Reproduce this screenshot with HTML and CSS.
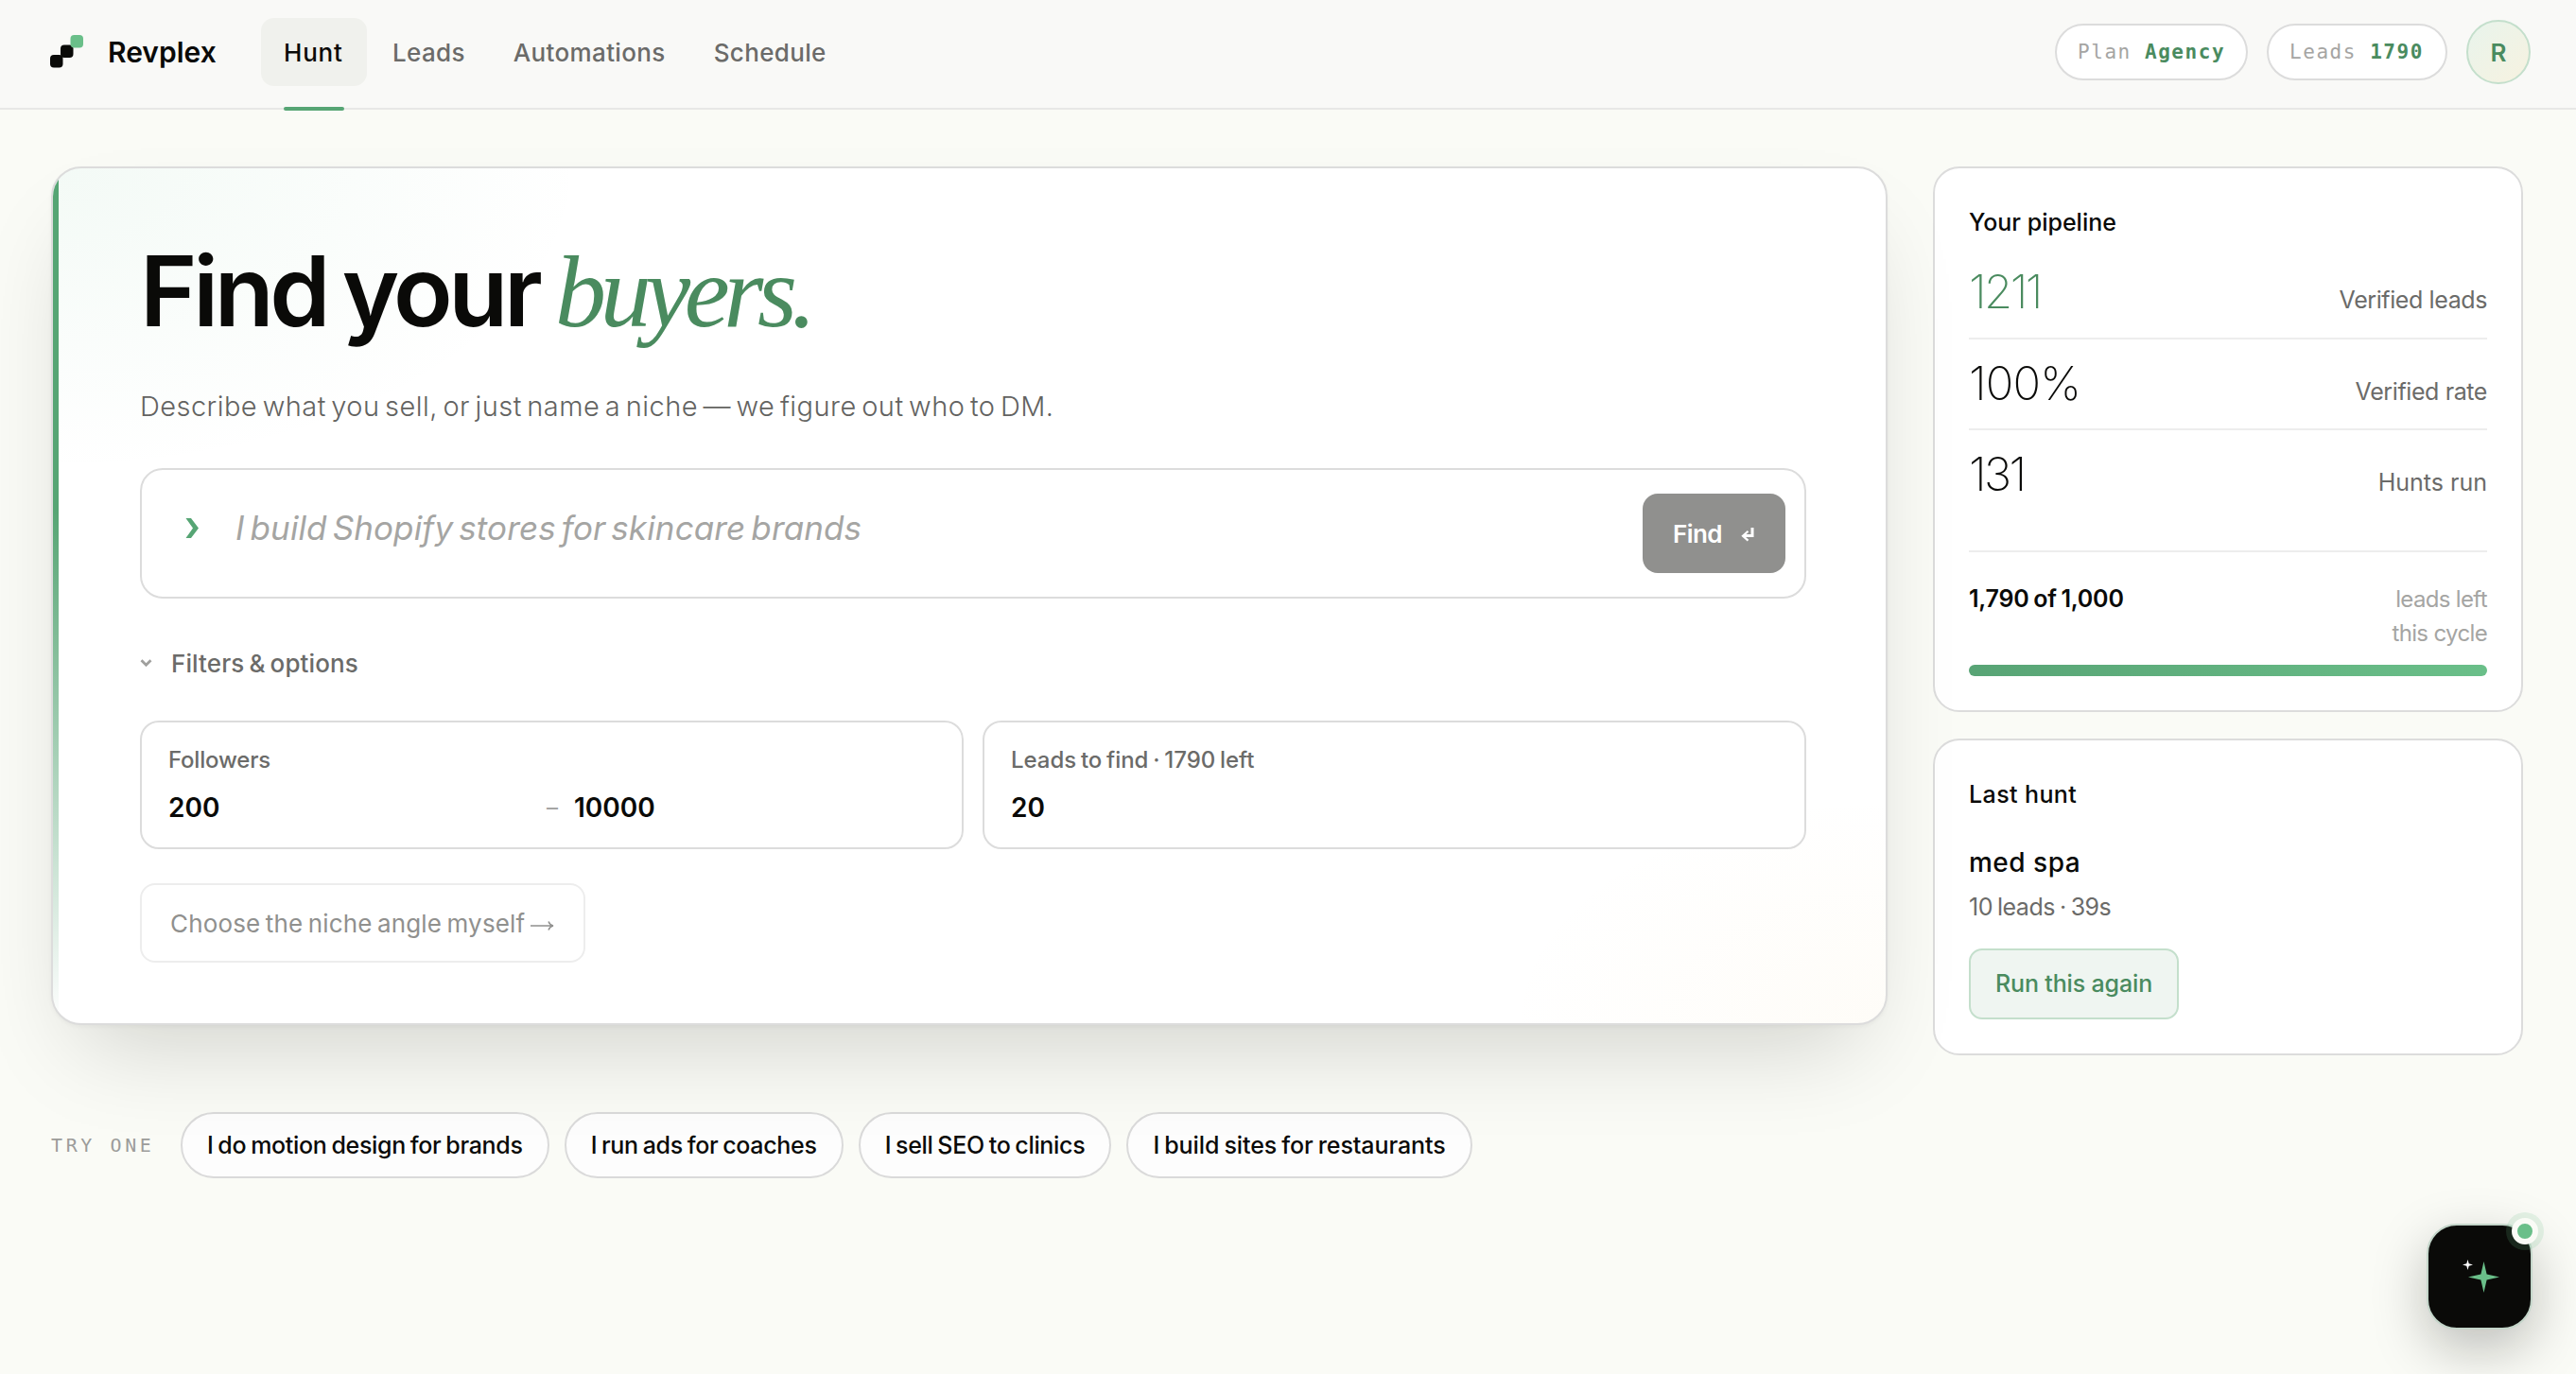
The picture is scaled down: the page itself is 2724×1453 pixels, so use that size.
FILE: index.html
```html
<!DOCTYPE html>
<html lang="en">

<head>
    <meta charset="UTF-8">
    <meta name="viewport" content="width=device-width, initial-scale=1.0">
    <title>Revplex</title>
    <link rel="stylesheet" href="styles.css">
</head>

<body>
    <header class="topbar">
        <a class="brand">
            <svg class="brand-mark" viewBox="0 0 36 36">
                <rect x="1" y="21" width="13.5" height="13.5" rx="4" fill="#0a0a08" />
                <rect x="12" y="10.5" width="13.5" height="13.5" rx="4" fill="#0a0a08" />
                <rect x="22.5" y="0" width="13.5" height="13.5" rx="4" fill="#6abf89" />
            </svg>
            <span class="brand-name">Revplex</span>
        </a>
        <nav class="nav">
            <a class="nav-link active">Hunt</a>
            <a class="nav-link">Leads</a>
            <a class="nav-link">Automations</a>
            <a class="nav-link">Schedule</a>
        </nav>
        <div class="account">
            <div class="badge plan">Plan <b>Agency</b></div>
            <div class="badge">Leads <b>1790</b></div>
            <div class="avatar">R</div>
        </div>
    </header>

    <main class="layout">
        <div class="left">
            <section class="hero">
                <h1 class="title">Find your <em>buyers.</em></h1>
                <p class="subtitle">Describe what you sell, or just name a niche — we figure out who to DM.</p>

                <div class="prompt">
                    <svg class="prompt-mark" viewBox="0 0 14 21">
                        <path d="M0.5 0H6L14 10.5L6 21H0.5L8 10.5Z" fill="#56a574" />
                    </svg>
                    <span class="prompt-text">I build Shopify stores for skincare brands</span>
                    <button class="find">
                        Find
                        <svg class="return" viewBox="0 0 14 15">
                            <path d="M12 0V8.5H2.5" fill="none" stroke="#fff" stroke-width="3" />
                            <path d="M7.5 3.8L2 8.7L7.5 13.6" fill="none" stroke="#fff" stroke-width="2.2" />
                        </svg>
                    </button>
                </div>

                <div class="filters-toggle">
                    <svg class="caret" viewBox="0 0 13 8">
                        <path d="M1.5 1.2L6.5 6.2L11.5 1.2" fill="none" stroke="#a0a09e" stroke-width="2.8" />
                    </svg>
                    Filters &amp; options
                </div>

                <div class="filters">
                    <div class="field">
                        <div class="field-label">Followers</div>
                        <div class="range">
                            <span class="value">200</span>
                            <span class="dash">–</span>
                            <span class="value max">10000</span>
                        </div>
                    </div>
                    <div class="field">
                        <div class="field-label leads-label">Leads to find · 1790 left</div>
                        <div class="range">
                            <span class="value">20</span>
                        </div>
                    </div>
                </div>

                <button class="choose">
                    Choose the niche angle myself
                    <svg class="arrow" viewBox="0 0 25 12">
                        <path d="M0 6H24M19 1.5C20 4 21.5 5.5 24 6C21.5 6.5 20 8 19 10.5" fill="none" stroke="#90908e" stroke-width="1.5" />
                    </svg>
                </button>
            </section>

            <div class="try">
                <span class="try-label">TRY ONE</span>
                <button class="chip">I do motion design for brands</button>
                <button class="chip">I run ads for coaches</button>
                <button class="chip">I sell SEO to clinics</button>
                <button class="chip wide">I build sites for restaurants</button>
            </div>
        </div>

        <aside class="side">
            <section class="card">
                <h2 class="card-title">Your pipeline</h2>
                <div class="stat">
                    <span class="number green">1211</span>
                    <span class="stat-label">Verified leads</span>
                </div>
                <div class="stat">
                    <span class="number rate">100%</span>
                    <span class="stat-label">Verified rate</span>
                </div>
                <div class="stat">
                    <span class="number">131</span>
                    <span class="stat-label hunts">Hunts run</span>
                </div>
                <div class="quota">
                    <span class="quota-count">1,790 of 1,000</span>
                    <span class="quota-note">leads left<br>this cycle</span>
                </div>
                <div class="bar"></div>
            </section>

            <section class="card">
                <h2 class="card-title last">Last hunt</h2>
                <div class="hunt-name">med spa</div>
                <div class="hunt-meta">10 leads · 39s</div>
                <button class="again">Run this again</button>
            </section>
        </aside>
    </main>

    <button class="assistant">
        <svg class="sparkle" viewBox="0 0 40 36">
            <path d="M23.5 2L26.6 15.4L40 18.5L26.6 21.6L23.5 35L20.4 21.6L7 18.5L20.4 15.4Z" fill="#6abf89" />
            <path d="M6.5 0L7.7 4.3L12 5.5L7.7 6.7L6.5 11L5.3 6.7L1 5.5L5.3 4.3Z" fill="#fff" />
        </svg>
        <span class="dot"></span>
    </button>
</body>

</html>
```
FILE: styles.css
```css
* {
    box-sizing: border-box;
}

body {
    margin: 0;
    min-height: 100vh;
    background-color: #fafbf6;
    color: #0a0a08;
    font-family: Inter, "Liberation Sans", sans-serif;
}

h1,
h2,
p {
    margin: 0;
}

button {
    font-family: inherit;
    margin: 0;
    padding: 0;
}

/* Top bar */
.topbar {
    display: flex;
    align-items: center;
    height: 116px;
    padding: 0 48px 4px 52px;
    background: #f9f9f7;
    border-bottom: 2px solid #e8e8e6;
}

.brand {
    display: flex;
    align-items: center;
    width: 224px;
    gap: 26px;
}

.brand-mark {
    width: 36px;
    height: 36px;
}

.brand-name {
    font-size: 30px;
    font-weight: 600;
}

.nav {
    display: flex;
    gap: 3px;
}

.nav-link {
    position: relative;
    padding: 0 24px;
    line-height: 73px;
    font-size: 26px;
    font-weight: 450;
    letter-spacing: 0.35px;
    color: #6b6b69;
}

.nav-link.active {
    width: 112px;
    height: 72px;
    background: #f0f1ed;
    border-radius: 14px;
    color: #0a0a08;
    font-weight: 550;
    letter-spacing: 0.8px;
}

.nav-link.active::after {
    content: "";
    position: absolute;
    left: 24px;
    right: 24px;
    bottom: -26px;
    height: 4px;
    border-radius: 2px;
    background: #56a574;
}

.account {
    display: flex;
    align-items: center;
    gap: 20px;
    margin-left: auto;
}

.badge {
    width: 191px;
    height: 60px;
    padding-left: 22px;
    border: 2px solid #dcdcdc;
    border-radius: 30px;
    background: #fff;
    font: 21px/56px "DejaVu Sans Mono", monospace;
    letter-spacing: 1.55px;
    white-space: nowrap;
    color: #a5a5a3;
}

.badge.plan {
    width: 204px;
}

.badge b {
    color: #4a8b5f;
}

.avatar {
    width: 68px;
    height: 68px;
    border: 2px solid #c4dfcc;
    border-radius: 50%;
    background: linear-gradient(135deg, #e8f4ec, #f7f2e0);
    color: #4a8b5f;
    font-size: 26px;
    font-weight: 600;
    line-height: 66px;
    text-align: center;
}

/* Page grid */
.layout {
    display: grid;
    grid-template-columns: 1fr 624px;
    gap: 48px;
    align-items: start;
    padding: 60px 56px 0 54px;
}

.hero {
    position: relative;
    height: 908px;
    padding: 78px 84px 0 92px;
    border: 2px solid #dcdcdc;
    border-radius: 32px;
    background:
        radial-gradient(ellipse 560px 320px at 0 0, rgba(106, 191, 137, 0.08), rgba(106, 191, 137, 0)),
        radial-gradient(ellipse 400px 240px at 100% 100%, rgba(240, 200, 110, 0.05), rgba(240, 200, 110, 0)),
        #fff;
    box-shadow: 0 2px 4px rgba(10, 10, 8, 0.04), 0 48px 96px -32px rgba(10, 10, 8, 0.18);
    overflow: hidden;
}

/* Accent stripe along the left edge */
.hero::before {
    content: "";
    position: absolute;
    left: 0;
    top: 0;
    bottom: 0;
    width: 6px;
    background: linear-gradient(#56a574 40%, rgba(106, 191, 137, 0));
}

.title {
    font-size: 103px;
    font-weight: 600;
    line-height: 104px;
    letter-spacing: -4.4px;
    word-spacing: -5px;
    white-space: nowrap;
}

.title em {
    margin-left: 1px;
    font-family: "Liberation Serif", serif;
    font-size: 108px;
    font-weight: 400;
    line-height: 0;
    letter-spacing: -6.4px;
    color: #4a8b5f;
}

.subtitle {
    margin-top: 48px;
    font-size: 29px;
    font-weight: 350;
    line-height: 44px;
    letter-spacing: 0.44px;
    word-spacing: -3px;
    color: #636361;
}

.prompt {
    display: flex;
    align-items: flex-start;
    height: 138px;
    margin-top: 43px;
    padding: 25px 20px 0 46px;
    border: 2px solid #dcdcdc;
    border-radius: 24px;
    background: #fff;
}

.prompt-mark {
    width: 14px;
    height: 21px;
    margin: 26px 39px 0 0;
}

.prompt-text {
    margin-top: 12px;
    font-size: 35px;
    font-style: italic;
    line-height: 48px;
    letter-spacing: 0.12px;
    word-spacing: -4px;
    color: #a5a5a3;
}

.find {
    display: flex;
    align-items: center;
    justify-content: space-between;
    width: 151px;
    height: 84px;
    margin-left: auto;
    padding: 0 33px 0 32px;
    border: 0;
    border-radius: 16px;
    background: #90908e;
    color: #fff;
    font-size: 26px;
    font-weight: 600;
    letter-spacing: -0.6px;
}

.return {
    width: 14px;
    height: 15px;
    margin-top: 2px;
}

.filters-toggle {
    display: flex;
    align-items: center;
    gap: 20px;
    height: 40px;
    margin-top: 48px;
    font-size: 26px;
    font-weight: 500;
    letter-spacing: 0.1px;
    word-spacing: -2px;
    color: #6b6b69;
}

.caret {
    width: 13px;
    height: 8px;
}

.filters {
    display: grid;
    grid-template-columns: 1fr 1fr;
    gap: 20px;
    margin-top: 41px;
}

.field {
    height: 136px;
    padding: 24px 28px 22px;
    border: 2px solid #dcdcdc;
    border-radius: 20px;
    background: #fff;
}

.field-label {
    font-size: 24px;
    font-weight: 450;
    line-height: 32px;
    letter-spacing: -0.2px;
    color: #6b6b69;
}

.leads-label {
    letter-spacing: -0.05px;
    word-spacing: -1.5px;
}

.range {
    display: flex;
    margin-top: 14px;
    line-height: 40px;
}

.value {
    flex: 1;
    font-size: 28px;
    font-weight: 560;
}

.value.max {
    flex: 0 0 382px;
}

.dash {
    width: 29px;
    font-size: 24px;
    color: #a5a5a3;
}

.choose {
    display: flex;
    align-items: center;
    width: 471px;
    height: 84px;
    margin-top: 36px;
    padding-left: 30px;
    border: 2px solid #ededed;
    border-radius: 16px;
    background: none;
    color: #90908e;
    font-size: 26px;
    letter-spacing: 0.15px;
    word-spacing: -2px;
    white-space: nowrap;
}

.arrow {
    width: 25px;
    height: 12px;
    margin: 5px 0 0 6px;
}

/* Suggestions */
.try {
    display: flex;
    align-items: center;
    gap: 16px;
    margin-top: 92px;
}

.try-label {
    width: 121px;
    font: 20px "DejaVu Sans Mono", monospace;
    letter-spacing: 3.6px;
    white-space: nowrap;
    color: #9c9c9a;
}

.chip {
    height: 70px;
    padding: 0 26px;
    border: 2px solid #dadada;
    border-radius: 35px;
    background: #fdfdfd;
    color: #0a0a08;
    font-size: 25px;
    font-weight: 450;
    letter-spacing: -0.31px;
    word-spacing: -1.5px;
    white-space: nowrap;
}

.chip.wide {
    letter-spacing: -0.08px;
}

/* Sidebar */
.side {
    display: grid;
    gap: 28px;
}

.card {
    padding: 39px 36px 36px;
    border: 2px solid #dcdcdc;
    border-radius: 28px;
    background: #fff;
}

.card-title {
    font-size: 25px;
    font-weight: 550;
    line-height: 36px;
    margin-bottom: 9px;
}

.card-title.last {
    margin-bottom: 34px;
    letter-spacing: 0.4px;
}

.stat {
    display: flex;
    align-items: baseline;
    justify-content: space-between;
    height: 97px;
    padding-top: 17px;
    border-bottom: 2px solid #ededed;
}

.stat + .stat {
    height: 96px;
}

.stat:nth-of-type(3) {
    border-bottom: 0;
}

.number {
    font-size: 49px;
    font-weight: 220;
    line-height: 60px;
    letter-spacing: -2.6px;
}

.number.rate {
    letter-spacing: -0.9px;
}

.number.green {
    color: #4a8b5f;
}

.stat-label {
    font-size: 25px;
    letter-spacing: -0.4px;
    color: #6b6b69;
}

.stat-label.hunts {
    letter-spacing: 0;
}

.quota {
    display: flex;
    justify-content: space-between;
    margin-top: 31px;
    padding-top: 31px;
    border-top: 2px solid #ededed;
    line-height: 36px;
}

.quota-count {
    font-size: 25px;
    font-weight: 560;
    letter-spacing: -0.2px;
    word-spacing: -1.5px;
}

.quota-note {
    padding-top: 1px;
    margin-bottom: -1px;
    font-size: 24px;
    letter-spacing: -0.65px;
    text-align: right;
    color: #a5a5a3;
}

.bar {
    height: 12px;
    margin-top: 16px;
    border-radius: 6px;
    background: linear-gradient(90deg, #58a475, #6abf89);
}

.hunt-name {
    font-size: 28px;
    font-weight: 550;
    line-height: 40px;
    letter-spacing: 0.5px;
}

.hunt-meta {
    margin-top: 9px;
    font-size: 25px;
    line-height: 36px;
    letter-spacing: -0.5px;
    word-spacing: -1.5px;
    color: #6b6b69;
}

.again {
    display: block;
    width: 222px;
    height: 75px;
    margin-top: 26px;
    border: 2px solid #c4dfcc;
    border-radius: 14px;
    background: #eff5f1;
    color: #4a8b5f;
    font-size: 25px;
    font-weight: 550;
    line-height: 69px;
    letter-spacing: -0.15px;
}

/* Floating assistant button */
.assistant {
    position: fixed;
    right: 46px;
    bottom: 47px;
    width: 112px;
    height: 112px;
    border: 2px solid #c3d5c9;
    border-radius: 32px;
    background: #0a0a08;
    box-shadow: 0 20px 56px rgba(10, 10, 8, 0.25);
}

.sparkle {
    position: absolute;
    left: 35px;
    top: 36px;
    width: 40px;
    height: 36px;
}

.dot {
    position: absolute;
    right: -8px;
    top: -8px;
    width: 28px;
    height: 28px;
    border: 6px solid #fafbf6;
    border-radius: 50%;
    background: #6abf89;
    box-shadow: 0 0 0 6px rgba(106, 191, 137, 0.16);
}
```
